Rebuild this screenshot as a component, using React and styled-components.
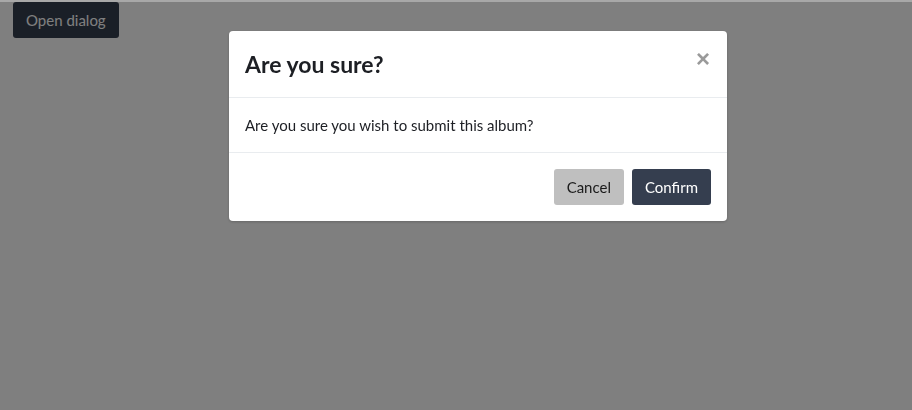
import React, { useState } from 'react'
import styled, { createGlobalStyle } from 'styled-components'

const Global = createGlobalStyle`
  html, body {
    margin: 0;
    padding: 0;
    background: #ffffff;
    font-family: Lato, 'Noto Sans', sans-serif;
  }
`

const Page = styled.div`
  padding: 2px 13px;
`

const Button = styled.button`
  font-family: Lato, 'Noto Sans', sans-serif;
  font-size: 15px;
  line-height: 20px;
  height: 36px;
  padding: 0 13px;
  border: none;
  border-radius: 3px;
  cursor: pointer;
  color: ${(p) => (p.$variant === 'secondary' ? '#1b1b1b' : '#ffffff')};
  background: ${(p) => (p.$variant === 'secondary' ? '#bfbfbf' : '#353e4f')};
`

const Overlay = styled.div`
  position: fixed;
  inset: 0;
  background: rgba(0, 0, 0, 0.5);
  border-top: 2px solid #a8a8a8;
  display: flex;
  align-items: flex-start;
  padding: 29px 0 0 229px;
`

const Modal = styled.div`
  width: 498px;
  background: #ffffff;
  border-radius: 4px;
  box-shadow: 0 1px 3px rgba(0, 0, 0, 0.2);
  color: #1d1f24;
`

const Header = styled.div`
  display: flex;
  align-items: center;
  justify-content: space-between;
  padding: 16px 15px 16px 16px;
  height: 34px;
  border-bottom: 1px solid #e9ecef;
`

const Title = styled.h2`
  margin: 0;
  font-size: 23px;
  font-weight: 700;
  line-height: 34px;
  color: #1d1f24;
`

const Close = styled.button`
  border: none;
  background: none;
  padding: 0 2px;
  margin-top: -10px;
  font-family: Arial, 'Liberation Sans', sans-serif;
  font-size: 24px;
  font-weight: 700;
  line-height: 24px;
  color: #9a9a9a;
  cursor: pointer;
`

const Body = styled.div`
  padding: 16px;
  font-size: 15px;
  line-height: 22px;
  border-bottom: 1px solid #e9ecef;
`

const Footer = styled.div`
  display: flex;
  justify-content: flex-end;
  gap: 8px;
  padding: 16px;
`

export default function App() {
  const [open, setOpen] = useState(true)
  return (
    <>
      <Global />
      <Page>
        <Button onClick={() => setOpen(true)}>Open dialog</Button>
      </Page>
      {open && (
        <Overlay>
          <Modal>
            <Header>
              <Title>Are you sure?</Title>
              <Close onClick={() => setOpen(false)}>×</Close>
            </Header>
            <Body>Are you sure you wish to submit this album?</Body>
            <Footer>
              <Button $variant="secondary" onClick={() => setOpen(false)}>Cancel</Button>
              <Button onClick={() => setOpen(false)}>Confirm</Button>
            </Footer>
          </Modal>
        </Overlay>
      )}
    </>
  )
}
